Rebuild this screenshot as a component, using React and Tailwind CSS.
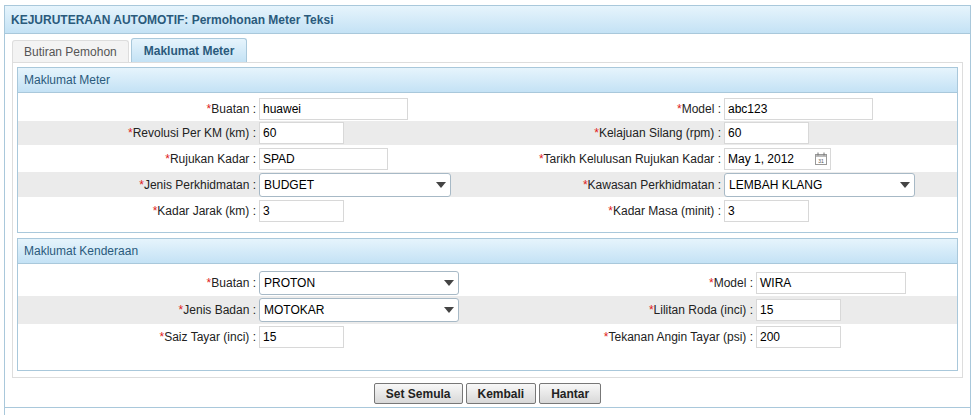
const F = { fontFamily: '"Liberation Sans", Arial, sans-serif' };

function Label({ t, w }) {
  return (
    <div className="text-right pr-[3px] text-[12px] text-[#222] shrink-0" style={{ width: w }}>
      <span className="text-[#e02020]">*</span>{t} :
    </div>
  );
}
function Input({ v, w, date }) {
  return (
    <div className="h-[22px] border border-[#d8d8d8] bg-white flex items-center px-[3px] text-[12px] text-black shrink-0 justify-between" style={{ width: w }}>
      <span>{v}</span>
      {date && (
        <svg width="12" height="13" viewBox="0 0 12 13"><rect x="0.5" y="2.5" width="11" height="10" fill="#fff" stroke="#999"/><rect x="1" y="3" width="10" height="2" fill="#bbb"/><line x1="3" y1="0.5" x2="3" y2="3.5" stroke="#777"/><line x1="9" y1="0.5" x2="9" y2="3.5" stroke="#777"/><text x="6" y="11" fontSize="5" textAnchor="middle" fill="#555">31</text></svg>
      )}
    </div>
  );
}
function Select({ v, w }) {
  return (
    <div className="h-[24px] border border-[#a7b9c6] rounded-[3px] bg-white flex items-center justify-between px-[4px] text-[12px] text-black shrink-0" style={{ width: w }}>
      <span>{v}</span>
      <svg width="10" height="6" viewBox="0 0 10 6"><path d="M0 0h10L5 6z" fill="#444"/></svg>
    </div>
  );
}
function Row({ gray, h, l1, c1, l2, c2, lw2 }) {
  return (
    <div className={`flex items-center ${gray ? 'bg-[#ebebeb]' : ''}`} style={{ height: h }}>
      <Label t={l1} w={241} />
      <div className="w-[207px] shrink-0">{c1}</div>
      <Label t={l2} w={lw2} />
      {c2}
    </div>
  );
}
function Header({ t }) {
  return (
    <div className="h-[25px] flex items-center px-[6px] text-[12px] text-[#2a5a7c] border-b border-[#a9c8db] bg-gradient-to-b from-[#e6f4fc] to-[#c4e2f5]">{t}</div>
  );
}

export default function App() {
  return (
    <div style={F} className="w-[974px] h-[418px] bg-white pt-[5px] pl-[4px]">
      <div className="w-[967px] h-[410px] border border-[#a9c8db] border-b-0">
        <div className="h-[28px] flex items-center px-[6px] text-[12px] font-bold text-[#2a5a7c] bg-gradient-to-b from-[#e6f4fc] to-[#c4e2f5] border-b border-[#a9c8db]">KEJURUTERAAN AUTOMOTIF: Permohonan Meter Teksi</div>
        <div className="flex items-end h-[28px] pl-[7px] gap-[2px]">
          <div className="h-[22px] px-[11px] flex items-center text-[12px] text-[#555] bg-[#f3f3f3] border border-[#ddd] border-b-0 rounded-t-[3px]">Butiran Pemohon</div>
          <div className="h-[24px] px-[12px] flex items-center text-[12px] font-bold text-[#2a5a7c] bg-gradient-to-b from-[#e6f4fc] to-[#c4e2f5] border border-[#a9c8db] border-b-0 rounded-t-[3px]">Maklumat Meter</div>
        </div>
        <div className="mx-[7px] h-[316px] border border-[#ddd] pt-[4px] px-[4px]">
          <div className="border border-[#a9c8db] h-[166px]">
            <Header t="Maklumat Meter" />
            <div className="pt-[4px]">
              <Row h={24} l1="Buatan" c1={<Input v="huawei" w={149} />} l2="Model" c2={<Input v="abc123" w={149} />} lw2={258} />
              <Row gray h={24} l1="Revolusi Per KM (km)" c1={<Input v="60" w={85} />} l2="Kelajuan Silang (rpm)" c2={<Input v="60" w={85} />} lw2={258} />
              <Row h={27} l1="Rujukan Kadar" c1={<Input v="SPAD" w={129} />} l2="Tarikh Kelulusan Rujukan Kadar" c2={<Input v="May 1, 2012" w={107} date />} lw2={258} />
              <Row gray h={25} l1="Jenis Perkhidmatan" c1={<Select v="BUDGET" w={192} />} l2="Kawasan Perkhidmatan" c2={<Select v="LEMBAH KLANG" w={191} />} lw2={258} />
              <Row h={27} l1="Kadar Jarak (km)" c1={<Input v="3" w={85} />} l2="Kadar Masa (minit)" c2={<Input v="3" w={85} />} lw2={258} />
            </div>
          </div>
          <div className="border border-[#a9c8db] h-[133px] mt-[5px]">
            <Header t="Maklumat Kenderaan" />
            <div className="pt-[6px]">
              <Row h={26} l1="Buatan" c1={<Select v="PROTON" w={200} />} l2="Model" c2={<Input v="WIRA" w={150} />} lw2={290} />
              <Row gray h={28} l1="Jenis Badan" c1={<Select v="MOTOKAR" w={200} />} l2="Lilitan Roda (inci)" c2={<Input v="15" w={85} />} lw2={290} />
              <Row h={26} l1="Saiz Tayar (inci)" c1={<Input v="15" w={85} />} l2="Tekanan Angin Tayar (psi)" c2={<Input v="200" w={85} />} lw2={290} />
            </div>
          </div>
        </div>
        <div className="flex justify-center gap-[3px] pt-[5px] pb-[3px] border-b border-[#a9c8db]">
          {['Set Semula', 'Kembali', 'Hantar'].map(b => (
            <div key={b} className="h-[21px] px-[11px] flex items-center text-[12px] font-bold text-[#222] border border-[#777] rounded-[2px] bg-gradient-to-b from-[#f8f8f8] to-[#d8d8d8]">{b}</div>
          ))}
        </div>
      </div>
    </div>
  );
}
